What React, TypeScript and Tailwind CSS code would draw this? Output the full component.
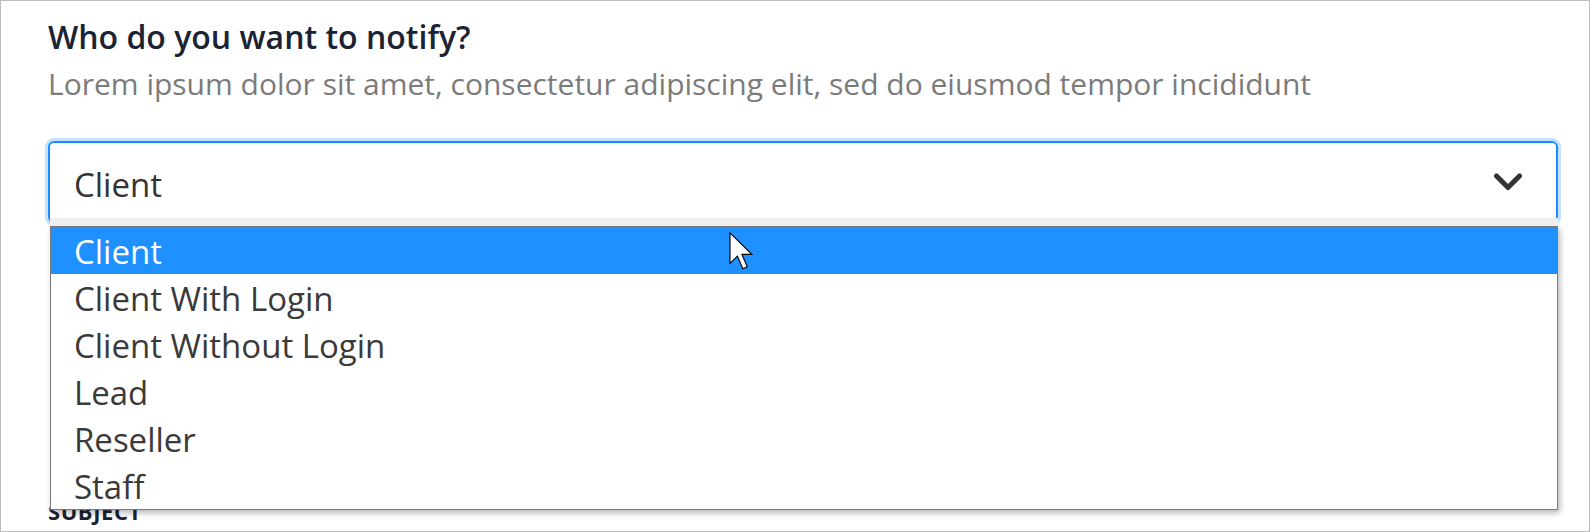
const options = [
  "Client",
  "Client With Login",
  "Client Without Login",
  "Lead",
  "Reseller",
  "Staff",
];

const font = { fontFamily: '"Open Sans", "Noto Sans", sans-serif' };

const Chevron = () => (
  <svg width="30" height="20" viewBox="0 0 30 20" fill="none">
    <polyline
      points="3.5,4 15,15.5 26.5,4"
      stroke="#333333"
      strokeWidth="5"
      strokeLinecap="round"
      strokeLinejoin="round"
    />
  </svg>
);

const Cursor = () => (
  <svg
    width="24"
    height="38"
    viewBox="0 0 12.6 20"
    className="absolute left-[728px] top-[231px] z-20"
  >
    <path
      d="M0.5 0.5 L0.5 16.5 L4.4 12.7 L7.3 19.3 L9.6 18.3 L6.8 11.8 L12 11.8 Z"
      fill="#ffffff"
      stroke="#000000"
      strokeWidth="0.6"
      strokeLinejoin="miter"
    />
  </svg>
);

export default function App() {
  return (
    <div
      className="relative w-[1590px] h-[532px] overflow-hidden bg-white border border-[#bdbdbd] pl-[47px] pr-[31px] pt-[18px]"
      style={font}
    >
      <h2 className="text-[32px] leading-[36px] font-semibold text-[#1c2333]">
        Who do you want to notify?
      </h2>
      <p className="mt-[11px] text-[30px] leading-[36px] text-[#7b7b7b]">
        Lorem ipsum dolor sit amet, consectetur adipiscing elit, sed do eiusmod tempor incididunt
      </p>

      <div className="relative mt-[39px]">
        <div className="flex h-[82px] items-center justify-between rounded-[6px] border-2 border-[#1a8cff] pl-[24px] pr-[33px] shadow-[0_0_0_3px_#c4e2ff]">
          <span className="pt-[5px] text-[33px] text-[#333333]">Client</span>
          <Chevron />
        </div>

        {/* open list */}
        <ul className="absolute left-[2px] top-[85px] z-10 w-[1508px] border border-[#7a7a7a] bg-white shadow-[0_-8px_0_#efefef,2px_3px_6px_rgba(0,0,0,0.28)]">
          {options.map((o, i) => (
            <li
              key={o}
              className={`h-[47px] pl-[23px] pt-[1px] text-[33px] leading-[47px] ${
                i === 0 ? "bg-[#1e90ff] text-white" : "text-[#3a3a3a]"
              }`}
            >
              {o}
            </li>
          ))}
        </ul>
      </div>

      <div className="mt-[276px]">
        <label className="block text-[22px] leading-[24px] font-bold tracking-wide text-[#1c2333]">
          SUBJECT
        </label>
      </div>

      <Cursor />
    </div>
  );
}
